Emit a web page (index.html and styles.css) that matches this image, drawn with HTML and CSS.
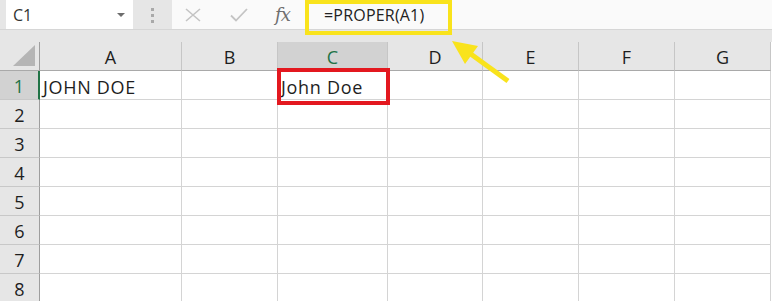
FILE: index.html
```html
<!DOCTYPE html>
<html lang="en">

<head>
    <meta charset="UTF-8">
    <title>PROPER</title>
    <link rel="stylesheet" href="styles.css">
</head>

<body>
<div id="app">
    <!-- 公式栏 -->
    <div class="formula-bar">
        <div class="name-box">
            <span>C1</span>
            <svg class="caret" width="8" height="5" viewBox="0 0 8 5"><path d="M0 0H8L4 4Z" fill="#6d6d6d"/></svg>
        </div>
        <div class="grip">
            <svg width="3" height="15" viewBox="0 0 3 15"><rect x="0" y="0" width="3" height="3" fill="#a9a9a9"/><rect x="0" y="6" width="3" height="3" fill="#a9a9a9"/><rect x="0" y="12" width="3" height="3" fill="#a9a9a9"/></svg>
        </div>
        <div class="formula-area">
            <span class="fbtn"><svg width="16" height="14" viewBox="0 0 16 14"><path d="M1 1L15 13M15 1L1 13" stroke="#c4c4c4" stroke-width="1.6" fill="none"/></svg></span>
            <span class="fbtn"><svg width="18" height="14" viewBox="0 0 18 14"><path d="M1 7.5L6 12.5L17 1" stroke="#c4c4c4" stroke-width="1.8" fill="none"/></svg></span>
            <span class="fx">fx</span>
            <div class="formula-input">=PROPER(A1)</div>
        </div>
    </div>

    <!-- 表格 -->
    <div class="sheet">
        <div class="hd corner"><svg width="22" height="21" viewBox="0 0 22 21"><path d="M22 0V21H0Z" fill="#b5b5b5"/></svg></div>
        <div class="hd">A</div>
        <div class="hd">B</div>
        <div class="hd sel">C</div>
        <div class="hd">D</div>
        <div class="hd">E</div>
        <div class="hd">F</div>
        <div class="hd">G</div>

        <div class="rh sel">1</div>
        <div class="c">JOHN DOE</div>
        <div class="c"></div>
        <div class="c active">John Doe<div class="red-box"></div></div>
        <div class="c"></div>
        <div class="c"></div>
        <div class="c"></div>
        <div class="c"></div>

        <div class="rh">2</div>
        <div class="c"></div><div class="c"></div><div class="c"></div><div class="c"></div><div class="c"></div><div class="c"></div><div class="c"></div>
        <div class="rh">3</div>
        <div class="c"></div><div class="c"></div><div class="c"></div><div class="c"></div><div class="c"></div><div class="c"></div><div class="c"></div>
        <div class="rh">4</div>
        <div class="c"></div><div class="c"></div><div class="c"></div><div class="c"></div><div class="c"></div><div class="c"></div><div class="c"></div>
        <div class="rh">5</div>
        <div class="c"></div><div class="c"></div><div class="c"></div><div class="c"></div><div class="c"></div><div class="c"></div><div class="c"></div>
        <div class="rh">6</div>
        <div class="c"></div><div class="c"></div><div class="c"></div><div class="c"></div><div class="c"></div><div class="c"></div><div class="c"></div>
        <div class="rh">7</div>
        <div class="c"></div><div class="c"></div><div class="c"></div><div class="c"></div><div class="c"></div><div class="c"></div><div class="c"></div>
        <div class="rh">8</div>
        <div class="c"></div><div class="c"></div><div class="c"></div><div class="c"></div><div class="c"></div><div class="c"></div><div class="c"></div>
    </div>

    <!-- 标注 -->
    <div class="yellow-box"></div>
    <svg class="arrow" width="772" height="100" viewBox="0 0 772 100">
        <line x1="508" y1="81" x2="468" y2="52" stroke="#f9e31c" stroke-width="5"/>
        <path d="M452 41L478 46L465 64Z" fill="#f9e31c"/>
    </svg>
</div>
</body>

</html>
```

FILE: styles.css
```css
* {
    box-sizing: border-box;
}
body {
    margin: 0;
    background: #fff;
    font-family: "Open Sans", "Liberation Sans", sans-serif;
    color: #1e1e1e;
}
#app {
    position: relative;
    width: 772px;
    height: 301px;
    overflow: hidden;
    background: #e6e6e6;
}

/* 公式栏 */
.formula-bar {
    display: flex;
    height: 30px;
    border-bottom: 1px solid #d6d6d6;
}
.name-box {
    display: flex;
    align-items: center;
    justify-content: space-between;
    width: 127px;
    margin-left: 6px;
    padding: 0 8px 0 7px;
    background: #fff;
    font-size: 16px;
    color: #333;
}
.caret {
    margin-top: 1px;
}
.grip {
    display: flex;
    align-items: center;
    justify-content: center;
    width: 39px;
    padding-top: 1px;
}
.formula-area {
    flex: 1;
    display: flex;
    align-items: center;
    background: #fafafa;
}
.fbtn {
    display: flex;
    margin-left: 13px;
    width: 33px;
}
.fbtn + .fbtn {
    margin-left: 12px;
}
.fx {
    margin-left: 12px;
    width: 49px;
    font-family: "DejaVu Serif", "Liberation Serif", serif;
    font-style: italic;
    font-size: 18px;
    color: #6f6f6f;
    letter-spacing: -1px;
}
.formula-input {
    font-size: 16px;
    color: #222;
    padding-top: 1px;
    letter-spacing: 0.2px;
}

/* 表格 */
.sheet {
    display: grid;
    grid-template-columns: 40px 142px 96px 110px 95px 96px 96px 96px;
    grid-template-rows: 29px repeat(8, 29px);
    margin-top: 12px;
    background: #fff;
}
.hd,
.rh,
.c {
    border-right: 1px solid #d4d4d4;
    border-bottom: 1px solid #d4d4d4;
}
.hd {
    display: flex;
    align-items: center;
    justify-content: center;
    background: #e6e6e6;
    border-right-color: #c6c6c6;
    border-bottom-color: #a9a9a9;
    font-size: 18px;
    padding-top: 2px;
}
.hd.corner {
    justify-content: flex-end;
    align-items: flex-end;
    padding: 0 4px 4px 0;
    border-right-color: #9e9e9e;
}
.rh {
    display: flex;
    align-items: center;
    justify-content: center;
    background: #e6e6e6;
    border-right-color: #9e9e9e;
    border-bottom-color: #c8c8c8;
    font-size: 18px;
    padding-top: 2px;
}
.sel {
    background: #d2d2d2;
    color: #217346;
}
.hd.sel {
    border-bottom-color: #217346;
}
.rh.sel {
    border-right: 2px solid #217346;
}
.c {
    display: flex;
    align-items: center;
    padding: 3px 0 0 3px;
    font-size: 18px;
    letter-spacing: 0.7px;
    white-space: nowrap;
}
.active {
    position: relative;
}

/* 标注 */
.red-box {
    position: absolute;
    left: -1px;
    top: -3px;
    width: 113px;
    height: 37px;
    border: 4px solid #e3181f;
}
.yellow-box {
    position: absolute;
    left: 305px;
    top: 0;
    width: 147px;
    height: 35px;
    border: 4px solid #f9e31c;
}
.arrow {
    position: absolute;
    left: 0;
    top: 0;
}
```
